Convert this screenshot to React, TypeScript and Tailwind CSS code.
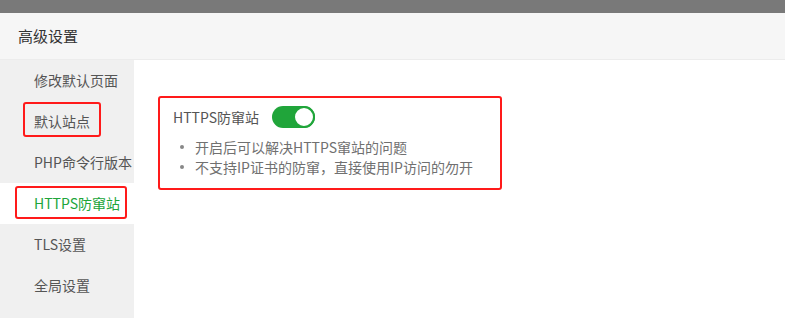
import React from 'react'

const menu = ['修改默认页面', '默认站点', 'PHP命令行版本', 'HTTPS防窜站', 'TLS设置', '全局设置']

export default function App() {
    const active = 3
    return (
        <div
            className="w-[785px] h-[318px] bg-white overflow-hidden flex flex-col"
            style={{ fontFamily: '"Noto Sans CJK SC", "Noto Sans", sans-serif' }}
        >
            {/* dimmed page behind the dialog */}
            <div className="h-[13px] bg-[#797979] shrink-0" />

            {/* Title */}
            <div className="h-[47px] shrink-0 bg-[#f6f6f6] border-b border-[#ececec] flex items-center pl-[18px] text-[15px] text-[#333]">
                高级设置
            </div>

            <div className="flex flex-1 min-h-0">
                {/* Sidebar */}
                <div className="w-[134px] bg-[#f0f0f0] flex flex-col">
                    {menu.map((item, i) => (
                        <div
                            key={item}
                            className={
                                'relative h-[41px] flex items-center pl-[34px] text-[14px] ' +
                                (i === active ? 'bg-white text-[#20a53a]' : 'text-[#555]')
                            }
                        >
                            {item}
                            {i === 1 && (
                                <div className="absolute left-[23px] top-[1px] w-[78px] h-[35px] border-2 border-[#ff1a1a] rounded-[3px]" />
                            )}
                            {i === 3 && (
                                <div className="absolute left-[15px] top-[3px] w-[112px] h-[33px] border-2 border-[#ff1a1a] rounded-[3px]" />
                            )}
                        </div>
                    ))}
                </div>

                {/* Content */}
                <div className="flex-1 pl-[24px] pt-[36px]">
                    <div className="w-[344px] h-[94px] border-2 border-[#ff1a1a] rounded-[3px] pl-[13px] pt-[8px]">
                        <div className="flex items-center h-[22px]">
                            <span className="text-[14px] text-[#555]">HTTPS防窜站</span>
                            <div className="ml-[13px] w-[43px] h-[22px] rounded-full bg-[#20a53a] relative">
                                <div className="absolute right-0 top-0 w-[22px] h-[22px] rounded-full bg-white border-2 border-[#20a53a]" />
                            </div>
                        </div>
                        <ul className="mt-[9px] text-[14px] text-[#707070] leading-[20px]">
                            <li className="flex items-center">
                                <span className="w-[4px] h-[4px] rounded-full bg-[#888] ml-[7px] mr-[11px]" />
                                开启后可以解决HTTPS窜站的问题
                            </li>
                            <li className="flex items-center">
                                <span className="w-[4px] h-[4px] rounded-full bg-[#888] ml-[7px] mr-[11px]" />
                                不支持IP证书的防窜，直接使用IP访问的勿开
                            </li>
                        </ul>
                    </div>
                </div>
            </div>
        </div>
    )
}
